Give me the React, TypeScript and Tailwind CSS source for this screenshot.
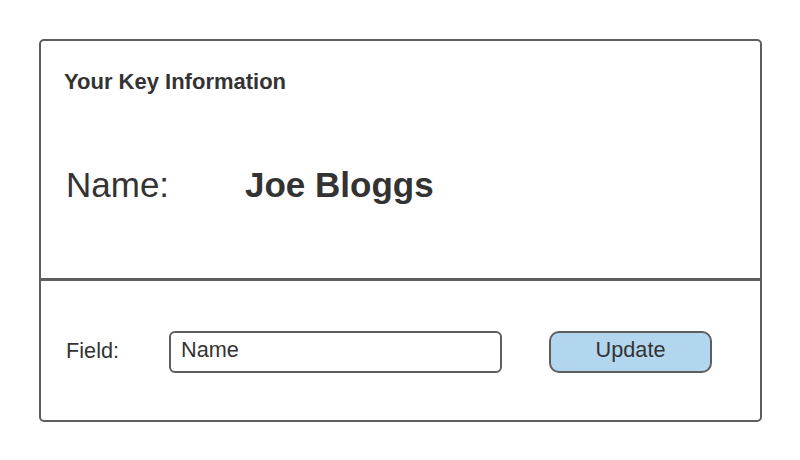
export default function App() {
  return (
    <div className="h-[460px] w-[800px] bg-white pl-[39px] pt-[39px] font-['Liberation_Sans',Arial,sans-serif] text-[#333333]">
      <div className="flex h-[383px] w-[723px] flex-col rounded-[5px] border-2 border-[#5e5e5e]">
        {/* key info */}
        <div className="h-[240px] border-b-[3px] border-[#5e5e5e] px-[23px] pt-[28px]">
          <h1 className="text-[22px] font-bold leading-[26px]">Your Key Information</h1>
          <div className="mt-[70px] flex items-baseline text-[35px] leading-[40px]">
            <span className="ml-[2px] w-[179px]">Name:</span>
            <span className="font-bold">Joe Bloggs</span>
          </div>
        </div>

        {/* edit row */}
        <div className="flex flex-1 items-center pl-[25px] pt-[2px]">
          <span className="w-[103px] text-[21.7px]">Field:</span>
          <div className="flex h-[42px] w-[333px] items-start rounded-[6px] border-[2.5px] border-[#5e5e5e] pl-[10px] pt-[4px] text-[21.7px] leading-[25px]">
            Name
          </div>
          <button className="ml-[47px] h-[42px] w-[163px] rounded-[10px] border-[2.5px] border-[#5e5e5e] bg-[#b3d6ef] pb-[4px] text-[21.7px] leading-[25px]">
            Update
          </button>
        </div>
      </div>
    </div>
  )
}
